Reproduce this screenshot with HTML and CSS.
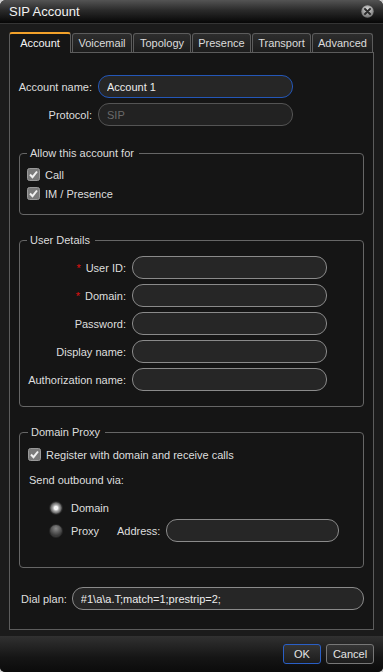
FILE: index.html
```html
<!DOCTYPE html>
<html lang="en">
  <head>
    <meta charset="UTF-8" />
    <meta name="viewport" content="width=device-width, initial-scale=1.0" />
    <link rel="stylesheet" href="styles.css">
    <title>SIP Account</title>
  </head>
  <body>
    <div class="window">
      <div class="titlebar">
        <span class="title">SIP Account</span>
        <svg class="close" width="13" height="13" viewBox="0 0 13 13">
          <defs>
            <radialGradient id="closeGrad" cx="50%" cy="35%" r="65%">
              <stop offset="0" stop-color="#e2e2e2" />
              <stop offset="1" stop-color="#6d6d6d" />
            </radialGradient>
          </defs>
          <circle cx="6.5" cy="6.5" r="6.2" fill="url(#closeGrad)" />
          <path d="M4 4 L9 9 M9 4 L4 9" stroke="#2c2c2c" stroke-width="2" stroke-linecap="round" />
        </svg>
      </div>

      <div class="content">
        <div class="tabs">
          <div class="tab active tab-account">Account</div>
          <div class="tab tab-voicemail">Voicemail</div>
          <div class="tab tab-topology">Topology</div>
          <div class="tab tab-presence">Presence</div>
          <div class="tab tab-transport">Transport</div>
          <div class="tab tab-advanced">Advanced</div>
        </div>

        <div class="panel">
          <div class="account-grid">
            <label class="field-label">Account name:</label>
            <input class="field focused" type="text" value="Account 1" />
            <label class="field-label">Protocol:</label>
            <input class="field disabled" type="text" value="SIP" disabled />
          </div>

          <fieldset class="group group-allow">
            <legend>Allow this account for</legend>
            <div class="check-list">
              <div class="check-row">
                <svg class="checkbox" width="13" height="13" viewBox="0 0 13 13">
                  <rect x="0.5" y="0.5" width="12" height="12" rx="2" fill="#7a7a7a" stroke="#9a9a9a" />
                  <path d="M3 6.5 L5.5 9.2 L10 3.5" fill="none" stroke="#f0f0f0" stroke-width="2" />
                </svg>
                <span>Call</span>
              </div>
              <div class="check-row">
                <svg class="checkbox" width="13" height="13" viewBox="0 0 13 13">
                  <rect x="0.5" y="0.5" width="12" height="12" rx="2" fill="#7a7a7a" stroke="#9a9a9a" />
                  <path d="M3 6.5 L5.5 9.2 L10 3.5" fill="none" stroke="#f0f0f0" stroke-width="2" />
                </svg>
                <span>IM / Presence</span>
              </div>
            </div>
          </fieldset>

          <fieldset class="group group-details">
            <legend>User Details</legend>
            <div class="details-grid">
              <label class="field-label"><span class="req">*</span>User ID:</label>
              <input class="field" type="text" />
              <label class="field-label"><span class="req">*</span>Domain:</label>
              <input class="field" type="text" />
              <label class="field-label">Password:</label>
              <input class="field" type="password" />
              <label class="field-label">Display name:</label>
              <input class="field" type="text" />
              <label class="field-label">Authorization name:</label>
              <input class="field" type="text" />
            </div>
          </fieldset>

          <fieldset class="group group-proxy">
            <legend>Domain Proxy</legend>
            <div class="check-row">
              <svg class="checkbox" width="13" height="13" viewBox="0 0 13 13">
                <rect x="0.5" y="0.5" width="12" height="12" rx="2" fill="#7a7a7a" stroke="#9a9a9a" />
                <path d="M3 6.5 L5.5 9.2 L10 3.5" fill="none" stroke="#f0f0f0" stroke-width="2" />
              </svg>
              <span>Register with domain and receive calls</span>
            </div>
            <div class="outbound">Send outbound via:</div>
            <div class="radio-row radio-domain">
              <span class="radio selected"></span>
              <span class="radio-label">Domain</span>
            </div>
            <div class="radio-row radio-proxy">
              <span class="radio"></span>
              <span class="radio-label">Proxy</span>
              <label class="address-label">Address:</label>
              <input class="field address" type="text" />
            </div>
          </fieldset>

          <div class="dial-row">
            <label class="dial-label">Dial plan:</label>
            <input class="field dial" type="text" value="#1\a\a.T;match=1;prestrip=2;" />
          </div>
        </div>
      </div>

      <div class="footer">
        <button class="btn btn-ok">OK</button>
        <button class="btn btn-cancel">Cancel</button>
      </div>
    </div>
  </body>
</html>
```

FILE: styles.css
```css
body {
  margin: 0;
  background-color: #cfcfcf;
  font-family: "Liberation Sans", Arial, sans-serif;
  font-size: 11px;
  color: #dedede;
}

.window {
  width: 383px;
  height: 672px;
  display: flex;
  flex-direction: column;
  background-color: #1b1b1b;
  border-radius: 6px 6px 5px 5px;
  overflow: hidden;
}

.titlebar {
  height: 24px;
  flex: none;
  box-sizing: border-box;
  display: flex;
  align-items: center;
  justify-content: space-between;
  padding: 0 9px;
  background: linear-gradient(#545454 0%, #2a2a2a 45%, #060606 100%);
  border-bottom: 1px solid #343434;
}

.title {
  font-size: 13px;
  color: #f2f2f2;
}

.close {
  display: block;
  margin-top: -1px;
}

.content {
  flex: 1;
  min-height: 0;
  display: flex;
  flex-direction: column;
  padding: 8px 9px 6px 9px;
}

/* tabs */
.tabs {
  display: flex;
  align-items: flex-end;
  gap: 1px;
  height: 20px;
  flex: none;
}

.tab {
  height: 19px;
  box-sizing: border-box;
  border: 1px solid #5c5c5c;
  border-bottom: none;
  border-radius: 3px 3px 0 0;
  background: linear-gradient(#2d2d2d, #1d1d1d);
  text-align: center;
  line-height: 18px;
  color: #dcdcdc;
}

.tab.active {
  position: relative;
  z-index: 1;
  height: 21px;
  margin-bottom: -1px;
  border-top: 2px solid #f2a12a;
  background: #151515;
  color: #f4f4f4;
  line-height: 19px;
}

.tab-account { width: 62px; }
.tab-voicemail { width: 60px; }
.tab-topology { width: 58px; }
.tab-presence { width: 59px; }
.tab-transport { width: 59px; }
.tab-advanced { width: 61px; }

.panel {
  flex: 1;
  border: 1px solid #5c5c5c;
  background-color: #151515;
}

/* inputs */
.field {
  height: 23px;
  box-sizing: border-box;
  border: 1px solid #8a8a8a;
  border-radius: 11px;
  background-color: #262626;
  color: #ececec;
  font-family: "Liberation Sans", Arial, sans-serif;
  font-size: 11px;
  padding: 0 8px;
  outline: none;
  margin: 0;
}

.field.focused {
  border-color: #2457b8;
}

.field.disabled {
  border-color: #545454;
  background-color: #222222;
  color: #6a6a6a;
}

.field-label {
  align-self: center;
  text-align: right;
  white-space: nowrap;
}

.account-grid {
  display: grid;
  grid-template-columns: 82px 195px;
  column-gap: 6px;
  row-gap: 5px;
  margin-top: 22px;
}

/* group boxes */
.group {
  margin: 20px 9px 0 9px;
  border: 1px solid #666666;
  border-radius: 4px;
  min-width: 0;
}

.group legend {
  padding: 0 5px 0 3px;
  line-height: 14px;
  color: #dcdcdc;
}

.group-allow {
  padding: 8px 7px 14px 7px;
}

.check-list {
  display: flex;
  flex-direction: column;
  gap: 6px;
}

.check-row {
  display: flex;
  align-items: center;
  gap: 5px;
  height: 13px;
}

.checkbox {
  display: block;
  flex: none;
}

.group-details {
  margin-top: 18px;
  padding: 9px 0 15px 0;
}

.group-details legend {
  margin-left: 7px;
}

.details-grid {
  display: grid;
  grid-template-columns: 106px 195px;
  column-gap: 6px;
  row-gap: 5px;
}

.req {
  color: #e01010;
  margin-right: 5px;
}

.group-proxy {
  margin-top: 18px;
  padding: 9px 8px 25px 8px;
}

.outbound {
  margin-top: 12px;
  line-height: 14px;
  padding-left: 1px;
}

.radio-row {
  display: flex;
  align-items: center;
  padding-left: 21px;
}

.radio-domain {
  margin-top: 14px;
  height: 13px;
}

.radio-proxy {
  margin-top: 5px;
}

.radio {
  width: 14px;
  height: 14px;
  box-sizing: border-box;
  border-radius: 50%;
  border: 1px solid #262626;
  background: radial-gradient(circle at 50% 30%, #8a8a8a 0, #5c5c5c 4px, #3a3a3a 7px);
  flex: none;
}

.radio.selected {
  background: radial-gradient(circle at 50% 50%, #f6f6f6 0, #f6f6f6 1.8px, #c4c4c4 2.6px, #9c9c9c 3.6px, #6e6e6e 5px, #444444 6px);
}

.radio-label {
  margin-left: 8px;
  width: 37px;
}

.address-label {
  margin-left: 9px;
  width: 49px;
}

.field.address {
  width: 173px;
}

.dial-row {
  display: flex;
  align-items: center;
  gap: 5px;
  margin-top: 19px;
  padding-left: 11px;
}

.dial-label {
  white-space: nowrap;
}

.field.dial {
  width: 292px;
}

/* footer */
.footer {
  height: 36px;
  flex: none;
  box-sizing: border-box;
  display: flex;
  justify-content: flex-end;
  align-items: flex-start;
  gap: 5px;
  padding: 8px 9px 0 0;
  background: linear-gradient(#313131, #151515 60%, #0b0b0b);
}

.btn {
  height: 20px;
  box-sizing: border-box;
  border: 1px solid #777777;
  border-radius: 3px;
  background: linear-gradient(#353535, #1c1c1c);
  color: #e4e4e4;
  font-family: "Liberation Sans", Arial, sans-serif;
  font-size: 11px;
  padding: 0;
  cursor: pointer;
}

.btn-ok {
  width: 38px;
  border-color: #2a5fc6;
}

.btn-cancel {
  width: 48px;
}
```
